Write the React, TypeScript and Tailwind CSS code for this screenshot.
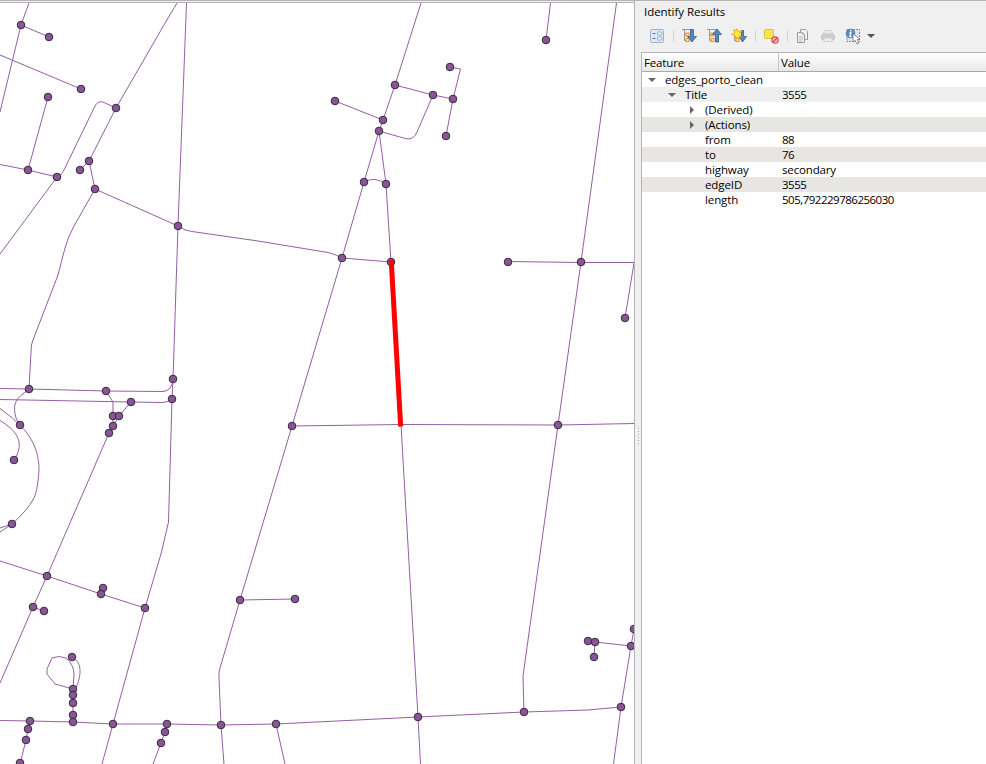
const EDGES: string[] = [
  "M29 3 L21 25 L0 112",
  "M21 25 L49 37",
  "M0 55 L81 89",
  "M48 97 L28 170",
  "M0 164.5 L28 170 L57 177",
  "M57 177 L0 254",
  "M57 177 Q62 175 64 170 L95 106 Q98 100 104 102.5 L116 108",
  "M177 3 L168 18 L116 108 L89 161 L95 189",
  "M89 161 L80 170",
  "M95 189 L74 226 Q68 237 65 248 Q61 263 58 275 L33 340 Q31 344 31 352 L29 389",
  "M95 189 L178 226 Q185 231 192 231.5 L258 241 L328 252.5 Q335 254 342 258 L391 262",
  "M186.5 3 L178 226 L173 379 L172 399 L168.500 522 L161.500 552 L145 608 L113 724 L102 764",
  "M0 388.500 L29 389 L106 391 L163 391.500 Q172 391 173 379",
  "M0 399.500 L131 402 L163 402.500 Q169 402 172 399",
  "M29 389 L24 393 C14 400 13 407 16 418 L20 425",
  "M0 408.500 Q12 417 20 425",
  "M0 420.500 C17 431 23 441 17 455 L14 460",
  "M20 425 C35 440 39 456 39 470 C38 483 37 491 34 498 Q27 511 12 524",
  "M12 524 L0 528",
  "M12 524 L0 532",
  "M106 391 L113 402 L113 426 L109 433 L47 576 L33 607 L0 683",
  "M131 402 L119 416 L113 426",
  "M113 416 L119 416",
  "M0 561 L47 576 L101 594 L145 608",
  "M103 588 L101 594",
  "M33 607 L44 611",
  "M72 657 C83 663 81 676 76 688",
  "M73 689 L55 684 L47 674 L47 669 L52 658 Q59 655 66 658 Q74 665 74 674 L73 689 L73 722",
  "M0 720.500 L30 721 L73 722 L113 724 L167 724 L221 725 L276 724 L418 717 L524 712 L588 710 L621 707",
  "M30 721 L28 729 L26 740 L20 764",
  "M167 724 L165 732 L161 743 L153 764",
  "M421 3 L395 85 L383 120 L379 131 L364 182 L342 258 L292 426 L240 600 L220 668 Q218.500 672 219 678 L221 725 L224 764",
  "M240 600 L295 599",
  "M276 724 L285 764",
  "M335 101 L383 120",
  "M395 85 L433 95 L453 99 L446 136",
  "M450 67 L460.500 69 L453 99",
  "M433 95 L417 132 Q414 139 408 139 Q403 138 379 131",
  "M379 131 L386 184 L391 262 L401 425 L418 717 L420.500 764",
  "M364 182 Q375 176 386 184",
  "M550.500 3 L546 40",
  "M616.500 3 L581 262 L558 425 L523 676 L524 712",
  "M508 261.500 L581 262.500 L634 262.500",
  "M634 263 L625 318",
  "M292 426 L401 424.500 L558 425 L634 423.500",
  "M634 629 L631 646 L621 707 L613.500 764",
  "M588 641 L595 642 L631 646",
  "M595 642 L594 657",
];

const NODES: [number, number][] = [
  [21, 25], [49, 37], [81, 89], [48, 97], [116, 108], [28, 170], [57, 177],
  [89, 161], [80, 170], [95, 189], [178, 226], [173, 379], [172, 399],
  [29, 389], [106, 391], [131, 402], [113, 416], [119, 416], [113, 426],
  [109, 433], [20, 425], [14, 460], [12, 524], [47, 576], [103, 588],
  [101, 594], [145, 608], [33, 607], [44, 611], [72, 657], [73, 689],
  [73, 695], [73, 703], [73, 715], [73, 722], [30, 721], [28, 729],
  [26, 740], [20, 763], [113, 724], [167, 724], [165, 732], [161, 743],
  [221, 725], [276, 724], [418, 717], [524, 712], [621, 707], [631, 646],
  [634, 629], [588, 641], [595, 642], [594, 657], [240, 600], [295, 599],
  [292, 426], [558, 425], [581, 262], [508, 262], [625, 318], [546, 40],
  [342, 258], [391, 262], [364, 182], [386, 184], [379, 131], [383, 120],
  [395, 85], [335, 101], [433, 95], [453, 99], [450, 67], [446, 136],
];

function MapCanvas() {
  return (
    <svg className="block h-[761px] w-[634px] shrink-0 bg-white" viewBox="0 3 634 761">
      <g fill="none" stroke="#945fa2" strokeWidth="1">
        {EDGES.map((d) => (
          <path key={d} d={d} />
        ))}
      </g>
      <g fill="#885695" stroke="#35293b" strokeWidth="1">
        {NODES.map(([x, y]) => (
          <circle key={`${x}-${y}`} cx={x} cy={y} r="3.8" />
        ))}
      </g>
      <path d="M391.200 260 L400.700 426.500" stroke="#ff0000" strokeWidth="5" />
    </svg>
  );
}

function FormIcon() {
  return (
    <svg className="size-4" viewBox="0 0 16 16">
      <rect x="1.500" y="1.500" width="13" height="13" rx="1" fill="#dfe9f2" stroke="#9ab5cf" />
      <path d="M3.500 5.500h3M3.500 10.500h3" stroke="#5e7890" />
      <rect x="8.500" y="4" width="4.500" height="3" rx="1" fill="#fff" stroke="#8daccb" />
      <rect x="8.500" y="9" width="4.500" height="3" rx="1" fill="#fff" stroke="#8daccb" />
    </svg>
  );
}

function TreeLines() {
  return (
    <>
      <path d="M1 1.500h10M3.500 1v11.500M3.500 6.500h2M3.500 12.500h2" fill="none" stroke="#9b9b95" />
      <rect x="5" y="5" width="3" height="3" fill="#fff1c5" stroke="#ee8b20" />
      <rect x="5" y="10.500" width="3" height="3" fill="#fff1c5" stroke="#ee8b20" />
    </>
  );
}

function ExpandIcon() {
  return (
    <svg className="size-4" viewBox="0 0 16 16">
      <TreeLines />
      <path d="M9.500 1.500h3v7h3L11 14 6.500 8.500h3z" fill="#5685bc" stroke="#315f91" strokeWidth=".8" />
    </svg>
  );
}

function CollapseIcon() {
  return (
    <svg className="size-4" viewBox="0 0 16 16">
      <TreeLines />
      <path d="M9.500 14h3V6.500h3L11 1 6.500 6.500h3z" fill="#5685bc" stroke="#315f91" strokeWidth=".8" />
    </svg>
  );
}

function ExpandNewIcon() {
  return (
    <svg className="size-4" viewBox="0 0 16 16">
      <path d="M3.500 8v4.500h2" fill="none" stroke="#9b9b95" />
      <rect x="5" y="10.500" width="3" height="3" fill="#fff1c5" stroke="#ee8b20" />
      <path d="M10.500 2.500h2v6h3L11.500 14 8 8.500h2.500z" fill="#5685bc" stroke="#315f91" strokeWidth=".8" />
      <path d="M5.800 .8l1.400 2.700 3.300-.7-1.900 2.900L10.500 8.800 7.300 8.400 5 10.800 4.200 7.600.6 6.400l3-1.600L2.800 1.500l2.400 1.200z" fill="#fff033" stroke="#f4a01c" strokeWidth=".9" />
    </svg>
  );
}

function ClearIcon() {
  return (
    <svg className="size-4" viewBox="0 0 16 16">
      <rect x="1.500" y="1.500" width="9" height="9" rx="1" fill="#fbe54e" stroke="#dcc046" />
      <circle cx="12" cy="12" r="3.200" fill="#f5c0c0" stroke="#d94a50" strokeWidth="1.200" />
      <path d="M10 14l4-4" stroke="#d94a50" strokeWidth="1.200" />
    </svg>
  );
}

function CopyIcon() {
  return (
    <svg className="size-4" viewBox="0 0 16 16" fill="#f1f1f1" stroke="#9c9c9c">
      <path d="M5.500 1.500h5l2 2v8h-7z" />
      <path d="M2.500 4.500h5l2 2v8h-7z" />
      <path d="M7.500 4.500v2h2M4 9h4M4 11h4M4 13h3" fill="none" stroke="#bababa" />
    </svg>
  );
}

function PrintIcon() {
  return (
    <svg className="size-4" viewBox="0 0 16 16">
      <rect x="4" y="2.500" width="8" height="5" fill="#e9e9e9" stroke="#d6d6d6" />
      <rect x="1.500" y="6" width="13" height="6" rx="2" fill="#cdcdcd" stroke="#c6c6c6" />
      <rect x="4" y="10" width="8" height="3.500" fill="#f0f0f0" stroke="#d0d0d0" />
    </svg>
  );
}

function IdentifyIcon() {
  return (
    <svg className="h-[17px] w-4" viewBox="0 0 16 17">
      <rect x="2" y="1.500" width="12.500" height="12" fill="#e4e5e6" stroke="#858585" strokeDasharray="2 1" />
      <circle cx="5.500" cy="5.500" r="4.800" fill="#5a8ac2" />
      <path d="M5.700 2v1.500M4.500 4.700h1.300L5 8.500h1.500" fill="none" stroke="#fff" strokeWidth="1.400" />
      <path d="M8 5.500v8.500l2-1.800 2 3.800 2-1-1.900-3.500h3z" fill="#fff" stroke="#777" strokeWidth=".8" />
    </svg>
  );
}

function Toolbar() {
  return (
    <div className="flex h-8 items-start pl-2 pt-2">
      <FormIcon />
      <span className="ml-2 mt-0.5 h-3 w-px bg-[#d5d5d5]" />
      <div className="ml-[7px] flex gap-[9px]">
        <ExpandIcon />
        <CollapseIcon />
        <ExpandNewIcon />
      </div>
      <span className="ml-2 mt-0.5 h-3 w-px bg-[#d5d5d5]" />
      <div className="ml-[7px]"><ClearIcon /></div>
      <span className="ml-2 mt-0.5 h-3 w-px bg-[#d5d5d5]" />
      <div className="ml-[7px] flex gap-[9px]">
        <CopyIcon />
        <PrintIcon />
        <IdentifyIcon />
      </div>
      <svg className="ml-[6px] mt-[6px] h-1 w-2" viewBox="0 0 8 4"><path d="M0 0h8L4 4z" fill="#555" /></svg>
    </div>
  );
}

type Row = {
  label: string;
  value?: string;
  pad: string;
  bg: string;
  arrow?: "down" | "right";
  valueTracking?: string;
};

const DIGITS = "tracking-[-0.5px]";

const ROWS: Row[] = [
  { label: "edges_porto_clean", pad: "pl-[6px]", bg: "bg-white", arrow: "down" },
  { label: "Title", value: "3555", pad: "pl-[26px]", bg: "bg-[#efefef]", arrow: "down", valueTracking: DIGITS },
  { label: "(Derived)", pad: "pl-[46px]", bg: "bg-white", arrow: "right" },
  { label: "(Actions)", pad: "pl-[46px]", bg: "bg-[#e7e6e2]", arrow: "right" },
  { label: "from", value: "88", pad: "pl-[46px]", bg: "bg-white", valueTracking: DIGITS },
  { label: "to", value: "76", pad: "pl-[46px]", bg: "bg-[#e7e6e2]", valueTracking: DIGITS },
  { label: "highway", value: "secondary", pad: "pl-[46px]", bg: "bg-white", valueTracking: "tracking-[-0.15px]" },
  { label: "edgeID", value: "3555", pad: "pl-[46px]", bg: "bg-[#e7e6e2]", valueTracking: DIGITS },
  { label: "length", value: "505,792229786256030", pad: "pl-[46px]", bg: "bg-white", valueTracking: DIGITS },
];

function Arrow({ dir }: { dir?: "down" | "right" }) {
  return (
    <svg className="mr-[9px] h-2 w-2 shrink-0" viewBox="0 0 8 8">
      {dir === "down" && <path d="M0 2h8L4 6z" fill="#666" />}
      {dir === "right" && <path d="M2 0v8l4-4z" fill="#666" />}
    </svg>
  );
}

function ResultsTree() {
  return (
    <div className="flex flex-1 flex-col border-l border-t border-[#b4b4b4] bg-white">
      <div className="flex h-[19px] border-b border-[#a9a9a9] bg-gradient-to-b from-white to-[#e9e9e9] leading-[19px]">
        <div className="w-[137px] border-r border-[#c4c4c4] pl-[2px] tracking-[-0.15px]">Feature</div>
        <div className="pl-[2px] tracking-[-0.1px]">Value</div>
      </div>
      {ROWS.map((row) => (
        <div key={row.label} className={`flex h-[15px] leading-[15px] ${row.bg}`}>
          <div className={`flex w-[137px] items-center ${row.pad}`}>
            <Arrow dir={row.arrow} />
            <span className="tracking-[-0.1px]">{row.label}</span>
          </div>
          <div className={`pl-[3px] ${row.valueTracking ?? ""}`}>{row.value}</div>
        </div>
      ))}
    </div>
  );
}

export default function App() {
  return (
    <div className="flex h-[764px] w-[986px] flex-col overflow-hidden bg-[#f0f0f0] font-['Open_Sans','Noto_Sans',sans-serif] text-[11.5px] text-black">
      <div className="flex h-[764px]">
        <div className="flex w-[634px] flex-col">
          <div className="h-[3px] shrink-0 border-y border-[#b4b4b4] bg-[#efefef]" />
          <MapCanvas />
        </div>
        <div className="flex w-[7px] flex-col items-center justify-center border-l border-t border-[#b4b4b4] pt-[107px]">
          <div className="flex flex-col gap-[2px]">
            {[0, 1, 2, 3, 4, 5].map((n) => (
              <span key={n} className="h-px w-px bg-[#aaa]" />
            ))}
          </div>
        </div>
        <div className="flex w-[345px] flex-col whitespace-nowrap border-t border-[#b4b4b4]">
          <div className="h-[19px] pl-[3px] pt-[2px] leading-[17px] tracking-[-0.05px]">Identify Results</div>
          <Toolbar />
          <ResultsTree />
        </div>
      </div>
    </div>
  );
}
